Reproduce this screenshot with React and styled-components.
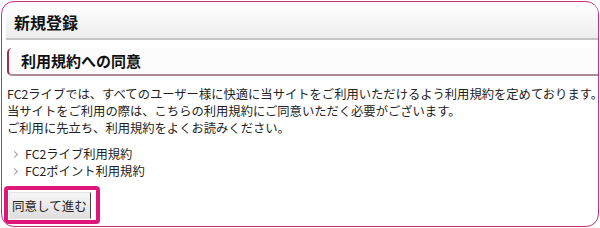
import styled, { createGlobalStyle } from "styled-components";

const GlobalStyle = createGlobalStyle`
  html, body {
    margin: 0;
    padding: 0;
    background: #fff;
  }
  body {
    font-family: "Noto Sans CJK JP", "Noto Sans", sans-serif;
    color: #333;
  }
`;

const Frame = styled.div`
  box-sizing: border-box;
  width: 598px;
  height: 226px;
  margin: 1px 0 0 1px;
  border: 1px solid #c92d7e;
  border-radius: 13px;
  padding: 3px 0 0 4px;
  overflow: hidden;
  display: flex;
  flex-direction: column;
`;

const TitleBar = styled.h1`
  box-sizing: border-box;
  margin: 0;
  height: 35px;
  padding: 0 0 0 8px;
  display: flex;
  align-items: center;
  font-size: 16px;
  font-weight: bold;
  color: #111;
  background: linear-gradient(#fefefe, #ededed);
  border-bottom: 2px solid #c4c4c4;
`;

const SubHeading = styled.h2`
  box-sizing: border-box;
  margin: 8px 0 0 1px;
  height: 28px;
  padding: 0 0 1px 12px;
  display: flex;
  align-items: center;
  font-size: 15px;
  font-weight: bold;
  color: #111;
  background: #fcfcfd;
  border-left: 2px solid #a62a44;
  border-bottom: 2px solid #ad8a98;
  border-radius: 5px 0 0 5px;
`;

const Body = styled.p`
  margin: 10px 0 0 1px;
  font-size: 12.3px;
  line-height: 17px;
  white-space: nowrap;
  color: #222;
`;

const LinkList = styled.ul`
  list-style: none;
  margin: 9px 0 0 0;
  padding: 0 0 0 6px;
`;

const LinkItem = styled.li`
  display: flex;
  align-items: center;
  font-size: 12.3px;
  line-height: 17px;
  color: #222;

  &::before {
    content: "";
    width: 4px;
    height: 4px;
    margin-right: 8px;
    border-top: 1.5px solid #a0a0a0;
    border-right: 1.5px solid #a0a0a0;
    transform: rotate(45deg);
  }
`;

const Highlight = styled.div`
  align-self: flex-start;
  margin: 6px 0 0 -2px;
  padding: 2px 5px 1px 1px;
  border: 4px solid #df1679;
  border-radius: 4px;
  display: flex;
`;

const Button = styled.button`
  box-sizing: border-box;
  height: 27px;
  padding: 0 3px 0 2px;
  font-family: "Noto Sans CJK JP", sans-serif;
  font-size: 12.5px;
  color: #222;
  background: linear-gradient(#f6f6f6, #dedede);
  border: 1px solid #e6e6e6;
  border-right: 1.5px solid #444;
  border-radius: 0;
`;

export default function App() {
  return (
    <>
      <GlobalStyle />
      <Frame>
        <TitleBar>新規登録</TitleBar>
        <SubHeading>利用規約への同意</SubHeading>
        <Body>
          FC2ライブでは、すべてのユーザー様に快適に当サイトをご利用いただけるよう利用規約を定めております。
          <br />
          当サイトをご利用の際は、こちらの利用規約にご同意いただく必要がございます。
          <br />
          ご利用に先立ち、利用規約をよくお読みください。
        </Body>
        <LinkList>
          <LinkItem>FC2ライブ利用規約</LinkItem>
          <LinkItem>FC2ポイント利用規約</LinkItem>
        </LinkList>
        <Highlight>
          <Button>同意して進む</Button>
        </Highlight>
      </Frame>
    </>
  );
}
